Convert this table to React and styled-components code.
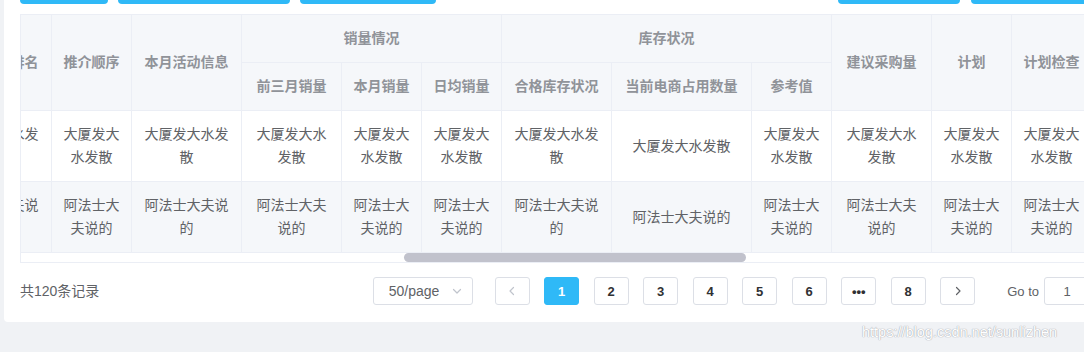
import React, { useLayoutEffect, useRef } from "react";
import styled, { createGlobalStyle } from "styled-components";

const GlobalStyle = createGlobalStyle`
  html, body {
    margin: 0;
    padding: 0;
    background: #f0f2f5;
    overflow: hidden;
  }
  body {
    font-family: "Liberation Sans", "Noto Sans CJK SC", sans-serif;
  }
`;

const BLUE = "#2fb9f7";
const LINE = "#ebeef5";

const Page = styled.div`
  position: relative;
  display: flex;
  flex-direction: column;
  align-items: flex-start;
  padding-left: 4px;
  width: 1106px;
  min-height: 352px;
`;

const Card = styled.div`
  margin-top: -44px;
  width: 1102px;
  box-sizing: border-box;
  padding: 16px 16px 0;
  background: #fff;
  border-radius: 4px;
`;

const Toolbar = styled.div`
  display: flex;
  align-items: center;
  height: 32px;
  margin-bottom: 10px;
`;

const ButtonGroup = styled.div`
  display: flex;
  gap: ${(p) => p.$gap}px;
  margin-left: ${(p) => (p.$right ? "auto" : "0")};
`;

const ToolButton = styled.button`
  width: ${(p) => p.$w}px;
  height: 32px;
  border: none;
  border-radius: 4px;
  background: ${BLUE};
  padding: 0;
`;

const TableFrame = styled.div`
  border: 1px solid ${LINE};
  border-right: none;
  box-sizing: border-box;
  width: 100%;
`;

const Scroller = styled.div`
  overflow: hidden;
  width: 100%;
`;

const Table = styled.table`
  table-layout: fixed;
  border-collapse: separate;
  border-spacing: 0;
  width: ${(p) => p.$w}px;
`;

const Col = styled.col`
  width: ${(p) => p.$w}px;
`;

const cellBase = `
  box-sizing: border-box;
  padding: 12px 10px;
  font-size: 14px;
  line-height: 23px;
  text-align: center;
  vertical-align: middle;
  border-right: 1px solid ${LINE};
  border-bottom: 1px solid ${LINE};
  overflow: hidden;
  word-break: break-all;
`;

const Th = styled.th`
  ${cellBase}
  background: #f5f7fa;
  color: #909399;
  font-weight: 700;
`;

const Td = styled.td`
  ${cellBase}
  background: ${(p) => (p.$striped ? "#f5f7fa" : "#fff")};
  color: #606266;
  font-weight: 400;
`;

const ScrollStrip = styled.div`
  height: 9px;
  display: flex;
  background: #fff;
`;

const Thumb = styled.div`
  height: 9px;
  border-radius: 5px;
  background: #c1c2cc;
`;

const Footer = styled.div`
  display: flex;
  align-items: center;
  justify-content: space-between;
  padding: 14px 0 17px;
`;

const Total = styled.span`
  font-size: 14px;
  color: #606266;
  line-height: 28px;
`;

const Pager = styled.div`
  display: flex;
  align-items: center;
`;

const SizeSelect = styled.div`
  width: 100px;
  height: 28px;
  box-sizing: border-box;
  border: 1px solid #dcdfe6;
  border-radius: 3px;
  display: flex;
  align-items: center;
  justify-content: space-between;
  padding: 0 9px 0 15px;
  font-size: 14px;
  color: #606266;
  margin-right: 22px;
`;

const PageList = styled.div`
  display: flex;
  gap: 14.5px;
`;

const PageBtn = styled.button`
  width: 35px;
  height: 28px;
  box-sizing: border-box;
  padding: 0;
  border: 1px solid ${(p) => (p.$active ? BLUE : "#dcdfe6")};
  border-radius: 3px;
  background: ${(p) => (p.$active ? BLUE : "#fff")};
  color: ${(p) => (p.$active ? "#fff" : "#303133")};
  font-family: "Liberation Sans", sans-serif;
  font-size: 13px;
  font-weight: 700;
  display: flex;
  align-items: center;
  justify-content: center;
`;

const Jumper = styled.div`
  display: flex;
  align-items: center;
  gap: 5px;
  margin-left: 32px;
  font-size: 13px;
  color: #606266;
`;

const JumpInput = styled.div`
  width: 46px;
  height: 28px;
  box-sizing: border-box;
  border: 1px solid #dcdfe6;
  border-radius: 3px;
  display: flex;
  align-items: center;
  justify-content: center;
  font-size: 13px;
  color: #606266;
`;

const Watermark = styled.div`
  position: absolute;
  left: 862px;
  top: 324px;
  font-family: "Liberation Sans", sans-serif;
  font-size: 14.5px;
  line-height: 16px;
  color: #ffffff;
  text-shadow: 0 0 1px #a3a5ad, 0 0 1px #a3a5ad;
  white-space: nowrap;
`;

const Chevron = ({ dir, color }) => (
  <svg width="12" height="12" viewBox="0 0 12 12" fill="none">
    <path
      d={dir === "left" ? "M7.5 2.5 L4 6 L7.5 9.5" : dir === "right" ? "M4.5 2.5 L8 6 L4.5 9.5" : "M2.5 4.5 L6 8 L9.5 4.5"}
      stroke={color}
      strokeWidth="1.2"
      strokeLinecap="round"
      strokeLinejoin="round"
    />
  </svg>
);

const columns = [
  { key: "rank", w: 110 },
  { key: "order", w: 80 },
  { key: "activity", w: 110 },
  { key: "prev3", w: 100 },
  { key: "month", w: 80 },
  { key: "daily", w: 80 },
  { key: "qualified", w: 110 },
  { key: "ecom", w: 140 },
  { key: "ref", w: 80 },
  { key: "suggest", w: 100 },
  { key: "plan", w: 80 },
  { key: "check", w: 80 },
];

const tableWidth = columns.reduce((s, c) => s + c.w, 0);

const rows = ["大厦发大水发散", "阿法士大夫说的"];

export default function App() {
  const scrollRef = useRef(null);

  useLayoutEffect(() => {
    if (scrollRef.current) scrollRef.current.scrollLeft = 79;
  }, []);

  return (
    <>
      <GlobalStyle />
      <Page>
        <Card>
          <Toolbar>
            <ButtonGroup $gap={10}>
              <ToolButton $w={88} />
              <ToolButton $w={172} />
              <ToolButton $w={136} />
            </ButtonGroup>
            <ButtonGroup $gap={11} $right>
              <ToolButton $w={122} />
              <ToolButton $w={119} />
            </ButtonGroup>
          </Toolbar>

          <TableFrame>
            <Scroller ref={scrollRef}>
              <Table $w={tableWidth}>
                <colgroup>
                  {columns.map((c) => (
                    <Col key={c.key} $w={c.w} />
                  ))}
                </colgroup>
                <thead>
                  <tr>
                    <Th rowSpan={2}>商品销量排名</Th>
                    <Th rowSpan={2}>推介顺序</Th>
                    <Th rowSpan={2}>本月活动信息</Th>
                    <Th colSpan={3}>销量情况</Th>
                    <Th colSpan={3}>库存状况</Th>
                    <Th rowSpan={2}>建议采购量</Th>
                    <Th rowSpan={2}>计划</Th>
                    <Th rowSpan={2}>计划检查</Th>
                  </tr>
                  <tr>
                    <Th>前三月销量</Th>
                    <Th>本月销量</Th>
                    <Th>日均销量</Th>
                    <Th>合格库存状况</Th>
                    <Th>当前电商占用数量</Th>
                    <Th>参考值</Th>
                  </tr>
                </thead>
                <tbody>
                  {rows.map((text, i) => (
                    <tr key={i}>
                      {columns.map((c) => (
                        <Td key={c.key} $striped={i % 2 === 1}>
                          {text}
                        </Td>
                      ))}
                    </tr>
                  ))}
                </tbody>
              </Table>
            </Scroller>
            <ScrollStrip>
              <Thumb style={{ marginLeft: 383, width: 342 }} />
            </ScrollStrip>
          </TableFrame>

          <Footer>
            <Total>共120条记录</Total>
            <Pager>
              <SizeSelect>
                <span>50/page</span>
                <Chevron dir="down" color="#c0c4cc" />
              </SizeSelect>
              <PageList>
                <PageBtn aria-label="上一页">
                  <Chevron dir="left" color="#c0c4cc" />
                </PageBtn>
                <PageBtn $active>1</PageBtn>
                <PageBtn>2</PageBtn>
                <PageBtn>3</PageBtn>
                <PageBtn>4</PageBtn>
                <PageBtn>5</PageBtn>
                <PageBtn>6</PageBtn>
                <PageBtn>•••</PageBtn>
                <PageBtn>8</PageBtn>
                <PageBtn aria-label="下一页">
                  <Chevron dir="right" color="#606266" />
                </PageBtn>
              </PageList>
              <Jumper>
                <span>Go to</span>
                <JumpInput>1</JumpInput>
              </Jumper>
            </Pager>
          </Footer>
        </Card>
        <Watermark>https://blog.csdn.net/sunlizhen</Watermark>
      </Page>
    </>
  );
}
